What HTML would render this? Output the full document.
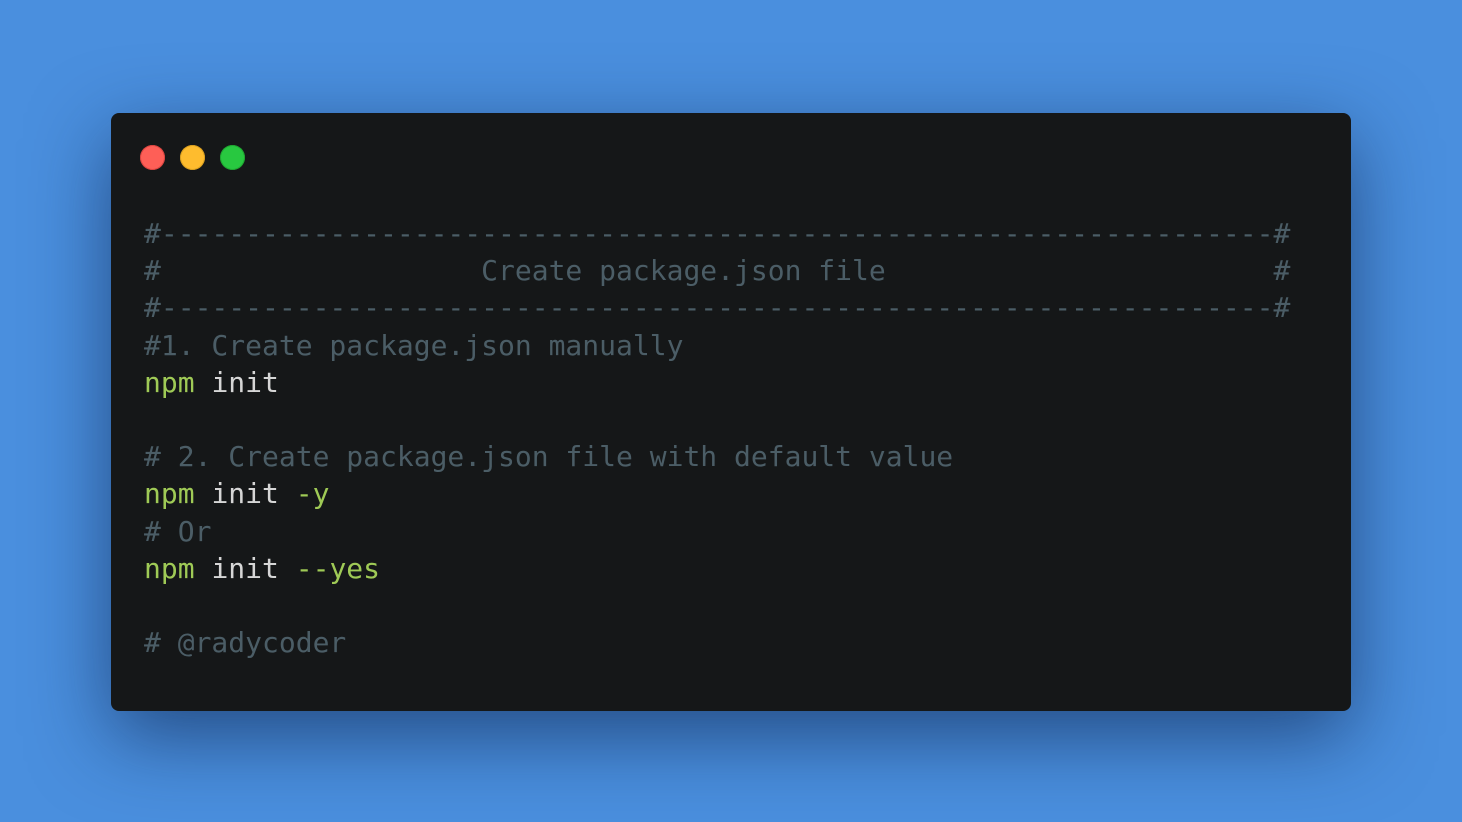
<!DOCTYPE html>
<html><head><meta charset="utf-8"><style>
html,body{margin:0;padding:0}
body{width:1462px;height:822px;background:#4a8fde;position:relative;overflow:hidden}
.card{position:absolute;left:111px;top:113px;width:1240px;height:598px;background:#151718;border-radius:8px;box-shadow:0 25px 80px rgba(10,30,70,.6)}
.dot{position:absolute;top:32px;width:25px;height:25px;border-radius:50%}
pre{position:absolute;left:33px;top:102px;margin:0;font-family:"DejaVu Sans Mono","Liberation Mono",monospace;font-size:28px;line-height:37.2px;color:#4b5d66}
.g{color:#9fca56}.w{color:#d6d6d6}
</style></head><body>
<div class="card">
<div class="dot" style="left:29px;background:#fe5f57;box-shadow:inset 0 0 0 1px #d9443f"></div>
<div class="dot" style="left:69px;background:#febc2e;box-shadow:inset 0 0 0 1px #d89e1f"></div>
<div class="dot" style="left:109px;background:#28c840;box-shadow:inset 0 0 0 1px #1ea530"></div>
<pre>#------------------------------------------------------------------#
#                   Create package.json file                       #
#------------------------------------------------------------------#
#1. Create package.json manually
<span class="g">npm</span> <span class="w">init</span>

# 2. Create package.json file with default value
<span class="g">npm</span> <span class="w">init</span> <span class="g">-y</span>
# Or
<span class="g">npm</span> <span class="w">init</span> <span class="g">--yes</span>

# @radycoder</pre>
</div>
</body></html>
